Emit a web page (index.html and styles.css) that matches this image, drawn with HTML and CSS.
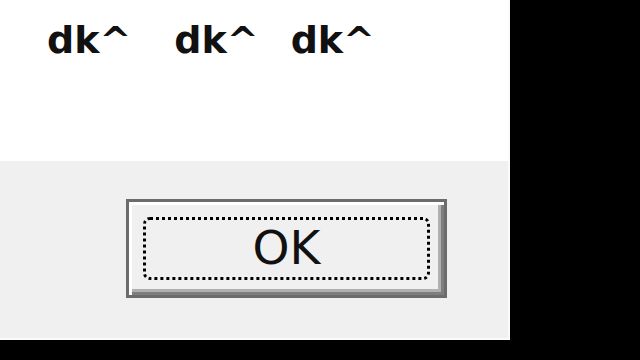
FILE: index.html
```html
<!DOCTYPE html>
<html lang="en">
<head>
    <meta charset="UTF-8">
    <title>Message</title>
    <link rel="stylesheet" href="styles.css">
</head>
<body>
    <div class="dialog">
        <div class="message">
            <span class="word">dk^</span>
            <span class="word second">dk^</span>
            <span class="word third">dk^</span>
        </div>
        <div class="footer">
            <button class="btn">
                <span class="focus">OK</span>
            </button>
        </div>
    </div>
</body>
</html>
```

FILE: styles.css
```css
body {
    margin: 0;
    padding: 0;
    background-color: #000;
    width: 640px;
    height: 360px;
    overflow: hidden;
}

/* 对话框 */
.dialog {
    width: 508px;
    height: 338px;
    display: flex;
    flex-direction: column;
    background: #f0f0f0;
    border-right: 2px solid #fafafa;
    border-bottom: 2px solid #fafafa;
}

/* 消息区 */
.message {
    height: 161px;
    background: #fff;
    padding-left: 47px;
    padding-top: 18px;
    box-sizing: border-box;
    display: flex;
    align-items: flex-start;
    font-family: "DejaVu Sans", sans-serif;
    font-weight: bold;
    font-size: 38px;
    line-height: 1.16;
    color: #111;
}

.word.second {
    margin-left: 43px;
}

.word.third {
    margin-left: 32px;
}

/* 按钮区 */
.footer {
    flex: 1;
    padding: 38px 0 0 126px;
}

.btn {
    width: 321px;
    height: 99px;
    margin: 0;
    padding: 0;
    display: flex;
    align-items: center;
    justify-content: center;
    background: #f0f0f0;
    border: 3px solid #6c6c6c;
    box-shadow: inset 3px 3px 0 #fff, inset -3px -3px 0 #7e7e7e, inset -6px -6px 0 #b0b0b0;
    box-sizing: border-box;
}

.focus {
    width: 287px;
    height: 63px;
    box-sizing: border-box;
    border: 3px dotted #000;
    border-radius: 7px;
    display: flex;
    align-items: center;
    justify-content: center;
    font-family: "DejaVu Sans", sans-serif;
    font-size: 47px;
    color: #111;
    padding-bottom: 3px;
}
```
